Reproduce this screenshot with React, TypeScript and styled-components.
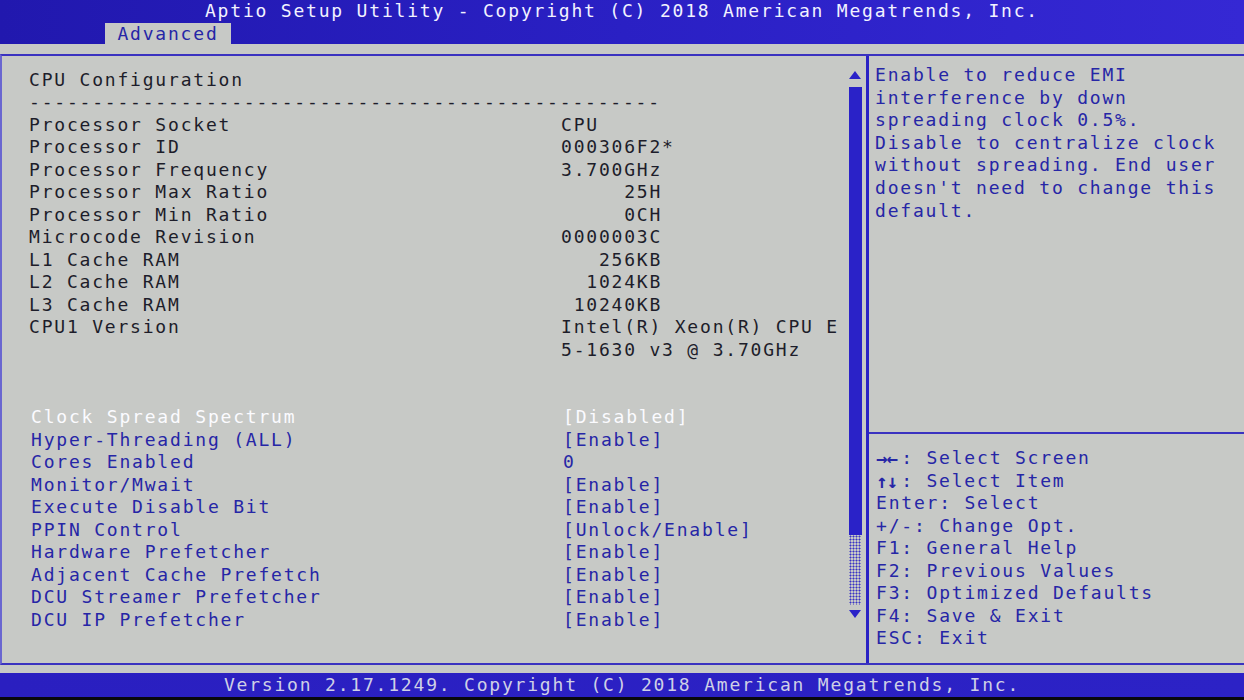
import React from "react";
import styled, { createGlobalStyle } from "styled-components";

const GlobalStyle = createGlobalStyle`
  html, body { margin: 0; padding: 0; background: #000; }
  #root { width: 1244px; height: 700px; overflow: hidden; }
`;

const TEXT_BLUE = "#2626a6";
const GREY = "#c7c9c6";
const MONO = `"DejaVu Sans Mono", "Liberation Mono", monospace`;

const Screen = styled.div`
  width: 1244px;
  height: 700px;
  display: flex;
  flex-direction: column;
  background: ${GREY};
  font-family: ${MONO};
  font-size: 18px;
  letter-spacing: 1.8px;
`;

const Header = styled.header`
  height: 44px;
  display: flex;
  flex-direction: column;
  background: linear-gradient(90deg, #2118ae 0%, #2a20c4 50%, #3528d4 100%);
`;

const Title = styled.div`
  height: 22px;
  line-height: 22px;
  text-align: center;
  color: #f2f2ff;
  white-space: pre;
`;

const TabRow = styled.div`
  height: 22px;
  display: flex;
  padding-left: 105px;
  align-items: flex-end;
`;

const Tab = styled.div`
  width: 126px;
  height: 21px;
  background: ${GREY};
  color: ${TEXT_BLUE};
  line-height: 22px;
  text-align: center;
`;

const Strip = styled.div<{ $h: number }>`
  height: ${(p) => p.$h}px;
  flex: none;
`;

const Main = styled.main`
  height: 611px;
  box-sizing: border-box;
  border-top: 2px solid #3a32c0;
  border-bottom: 2px solid #3a32c0;
  border-left: 2px solid #6a66d0;
  display: grid;
  grid-template-columns: 864px 3px 1fr;
`;

const LeftPanel = styled.section`
  display: grid;
  grid-template-columns: 1fr 14px;
  padding-right: 4px;
`;

const Content = styled.div`
  padding: 12.5px 0 0 27px;
`;

const Row = styled.div<{ $indent?: number }>`
  display: grid;
  grid-template-columns: 532px auto;
  height: 22.5px;
  line-height: 22.5px;
  white-space: pre;
  padding-left: ${(p) => p.$indent ?? 0}px;
`;

const toneColor = (t: "info" | "item" | "sel") =>
  t === "info" ? "#1d1d2a" : t === "sel" ? "#fbfbff" : TEXT_BLUE;

const Label = styled.span<{ $tone: "info" | "item" | "sel" }>`
  color: ${(p) => toneColor(p.$tone)};
`;

const Value = styled.span<{ $tone: "info" | "item" | "sel" }>`
  color: ${(p) => toneColor(p.$tone)};
`;

const ScrollBar = styled.div`
  display: flex;
  flex-direction: column;
  align-items: center;
  padding-top: 15px;
`;

const Thumb = styled.div`
  width: 13px;
  height: 448px;
  margin-top: 8px;
  background: #2a22c8;
`;

const Track = styled.div`
  width: 12px;
  height: 70px;
  background-image: radial-gradient(circle, #3a34c4 0.9px, transparent 1.1px);
  background-size: 3px 3px;
`;

const Arrow = styled.svg<{ $mt?: number }>`
  display: block;
  margin-top: ${(p) => p.$mt ?? 0}px;
`;

const Divider = styled.div`
  background: #2a22c4;
`;

const RightPanel = styled.section`
  display: flex;
  flex-direction: column;
  color: ${TEXT_BLUE};
`;

const Help = styled.div`
  height: 378px;
  padding: 8px 0 0 6px;
  box-sizing: border-box;
  border-bottom: 2px solid #3a32c0;
`;

const HelpLine = styled.div`
  height: 22.6px;
  line-height: 22.6px;
  white-space: pre;
`;

const Keys = styled.div`
  padding: 13px 0 0 7px;
`;

const KeyLine = styled.div`
  height: 22.5px;
  line-height: 22.5px;
  white-space: pre;
  display: flex;
`;

const Sym = styled.b`
  font-weight: bold;
  font-size: 19px;
  letter-spacing: -1px;
  display: inline-block;
  width: 25.2px;
  height: 22.5px;
  line-height: 22.5px;
  overflow: hidden;
`;

const Footer = styled.footer`
  height: 24px;
  line-height: 24px;
  background: linear-gradient(90deg, #2a1fc0, #2c22c6);
  color: #cfd0e6;
  text-align: center;
  white-space: pre;
`;

const Black = styled.div`
  flex: 1;
  background: #08080c;
`;

type Tone = "info" | "item" | "sel";
const rows: { l: string; v: string; t: Tone; indent?: number }[] = [
  { l: "CPU Configuration", v: "", t: "info" },
  { l: "--------------------------------------------------", v: "", t: "info" },
  { l: "Processor Socket", v: "CPU", t: "info" },
  { l: "Processor ID", v: "000306F2*", t: "info" },
  { l: "Processor Frequency", v: "3.700GHz", t: "info" },
  { l: "Processor Max Ratio", v: "     25H", t: "info" },
  { l: "Processor Min Ratio", v: "     0CH", t: "info" },
  { l: "Microcode Revision", v: "0000003C", t: "info" },
  { l: "L1 Cache RAM", v: "   256KB", t: "info" },
  { l: "L2 Cache RAM", v: "  1024KB", t: "info" },
  { l: "L3 Cache RAM", v: " 10240KB", t: "info" },
  { l: "CPU1 Version", v: "Intel(R) Xeon(R) CPU E", t: "info" },
  { l: "", v: "5-1630 v3 @ 3.70GHz", t: "info" },
  { l: "", v: "", t: "info" },
  { l: "", v: "", t: "info" },
  { l: "Clock Spread Spectrum", v: "[Disabled]", t: "sel", indent: 2 },
  { l: "Hyper-Threading (ALL)", v: "[Enable]", t: "item", indent: 2 },
  { l: "Cores Enabled", v: "0", t: "item", indent: 2 },
  { l: "Monitor/Mwait", v: "[Enable]", t: "item", indent: 2 },
  { l: "Execute Disable Bit", v: "[Enable]", t: "item", indent: 2 },
  { l: "PPIN Control", v: "[Unlock/Enable]", t: "item", indent: 2 },
  { l: "Hardware Prefetcher", v: "[Enable]", t: "item", indent: 2 },
  { l: "Adjacent Cache Prefetch", v: "[Enable]", t: "item", indent: 2 },
  { l: "DCU Streamer Prefetcher", v: "[Enable]", t: "item", indent: 2 },
  { l: "DCU IP Prefetcher", v: "[Enable]", t: "item", indent: 2 },
];

const help = [
  "Enable to reduce EMI",
  "interference by down",
  "spreading clock 0.5%.",
  "Disable to centralize clock",
  "without spreading. End user",
  "doesn't need to change this",
  "default.",
];

const keys: { s?: string; t: string }[] = [
  { s: "→←", t: ": Select Screen" },
  { s: "↑↓", t: ": Select Item" },
  { t: "Enter: Select" },
  { t: "+/-: Change Opt." },
  { t: "F1: General Help" },
  { t: "F2: Previous Values" },
  { t: "F3: Optimized Defaults" },
  { t: "F4: Save & Exit" },
  { t: "ESC: Exit" },
];

export default function App() {
  return (
    <>
      <GlobalStyle />
      <Screen>
        <Header>
          <Title>Aptio Setup Utility - Copyright (C) 2018 American Megatrends, Inc.</Title>
          <TabRow>
            <Tab>Advanced</Tab>
          </TabRow>
        </Header>
        <Strip $h={10} />
        <Main>
          <LeftPanel>
            <Content>
              {rows.map((r, i) => (
                <Row key={i} $indent={r.indent}>
                  <Label $tone={r.t}>{r.l}</Label>
                  <Value $tone={r.t}>{r.v}</Value>
                </Row>
              ))}
            </Content>
            <ScrollBar>
              <Arrow width="12" height="8" viewBox="0 0 12 8">
                <polygon points="6,0 12,8 0,8" fill="#2a22c8" />
              </Arrow>
              <Thumb />
              <Track />
              <Arrow $mt={5} width="12" height="8" viewBox="0 0 12 8">
                <polygon points="0,0 12,0 6,8" fill="#2a22c8" />
              </Arrow>
            </ScrollBar>
          </LeftPanel>
          <Divider />
          <RightPanel>
            <Help>
              {help.map((h, i) => (
                <HelpLine key={i}>{h}</HelpLine>
              ))}
            </Help>
            <Keys>
              {keys.map((k, i) => (
                <KeyLine key={i}>
                  {k.s && <Sym>{k.s}</Sym>}
                  {k.t}
                </KeyLine>
              ))}
            </Keys>
          </RightPanel>
        </Main>
        <Strip $h={8} />
        <Footer>Version 2.17.1249. Copyright (C) 2018 American Megatrends, Inc.</Footer>
        <Black />
      </Screen>
    </>
  );
}
